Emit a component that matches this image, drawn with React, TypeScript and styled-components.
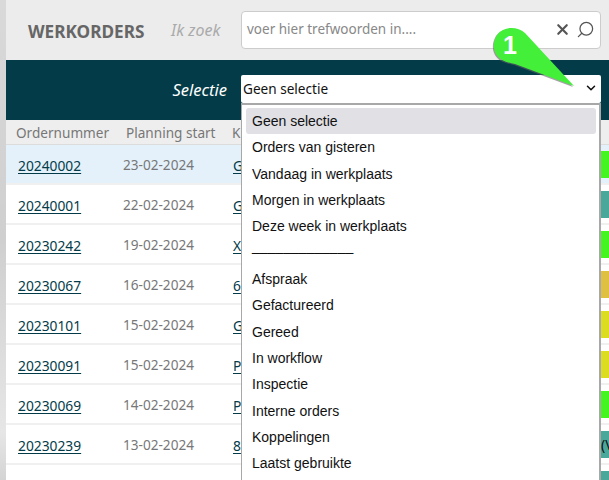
import styled, { createGlobalStyle } from "styled-components";
import { Fragment } from "react";
import { X, Search, ChevronDown } from "lucide-react";

const Global = createGlobalStyle`
    html, body { margin: 0; padding: 0; height: 100%; overflow: hidden; background: #fff; }
    * { box-sizing: border-box; }
`;

const Page = styled.div`
    position: relative;
    width: 609px;
    height: 480px;
    overflow: hidden;
    display: flex;
    font-family: "Noto Sans", "Open Sans", sans-serif;
`;
const Strip = styled.div`
    width: 6px;
    flex: none;
    background: linear-gradient(180deg, #d9d9d9 0%, #cfcfcf 50%, #e6e6e6 90%, #d4d4d4 100%);
`;
const Main = styled.div`
    flex: 1;
    min-width: 0;
`;
const Header = styled.header`
    height: 60px;
    background: #ececec;
    display: flex;
    align-items: center;
    padding-left: 22px;
`;
const Title = styled.h1`
    margin: 0;
    padding-top: 2px;
    width: 143px;
    color: #666;
    font-size: 17.2px;
    font-weight: 700;
    white-space: nowrap;
`;
const Hint = styled.span`
    width: 70px;
    color: #aaa;
    font-size: 16px;
    font-style: italic;
`;
const SearchBox = styled.div`
    width: 360px;
    height: 38px;
    background: #fff;
    border: 1px solid #ccc;
    border-radius: 4px;
    display: flex;
    align-items: center;
    padding: 0 5px 2px 5px;
    color: #888;
    font-size: 13.5px;
`;
const SearchText = styled.span`
    flex: 1;
`;
const SelectBar = styled.div`
    height: 60px;
    background: #033c48;
    display: flex;
    align-items: center;
    justify-content: flex-end;
    padding: 0 8px 2px 0;
    gap: 14px;
`;
const SelectLabel = styled.span`
    color: #fff;
    font-size: 16.5px;
    font-style: italic;
`;
const Select = styled.div`
    width: 360px;
    height: 28px;
    background: #fff;
    border-radius: 2px;
    display: flex;
    align-items: center;
    justify-content: space-between;
    padding: 0 3px 2px 2px;
    color: #111;
    font-size: 13.6px;
`;
const Columns = styled.div`
    height: 25px;
    background: #eeeeee;
    border-bottom: 1px solid #dcdcdc;
    display: flex;
    align-items: center;
    padding-left: 10px;
    color: #777;
    font-size: 13.6px;
`;
const Column = styled.span<{ $w: number }>`
    width: ${(p) => p.$w}px;
    flex: none;
    white-space: nowrap;
`;
const Row = styled.div<{ $active?: boolean }>`
    height: 40px;
    display: flex;
    align-items: center;
    padding-left: 12px;
    background: ${(p) => (p.$active ? "#e4f1fb" : "#fff")};
    border-bottom: 2px solid #f0f0f0;
    font-size: 13.8px;
`;
const OrderLink = styled.a`
    width: 105px;
    flex: none;
    padding-top: 3px;
    color: #033c48;
    text-decoration: underline;
    text-underline-offset: 2px;
`;
const DateCell = styled.span`
    width: 110px;
    flex: none;
    color: #777;
    font-size: 13.6px;
`;
const Customer = styled.a`
    flex: 1;
    padding-top: 3px;
    color: #033c48;
    text-decoration: underline;
    text-underline-offset: 2px;
    white-space: nowrap;
`;
const Status = styled.div<{ $color: string }>`
    width: 44px;
    height: 27px;
    flex: none;
    margin-right: -36px;
    background: ${(p) => p.$color};
    color: #111;
    font-size: 14px;
    line-height: 27px;
    white-space: nowrap;
    overflow: hidden;
`;
const Menu = styled.ul`
    position: absolute;
    left: 241px;
    top: 103px;
    width: 360px;
    height: 400px;
    margin: 0;
    padding: 3px 3px 0 4px;
    list-style: none;
    background: #fff;
    border-top: 2px solid #a8a8a8;
    border-left: 1px solid #a8a8a8;
    border-right: 2px solid #a8a8a8;
    font-family: "Liberation Sans", Arial, sans-serif;
    font-size: 14px;
    color: #111;
`;
const Option = styled.li<{ $selected?: boolean; $rule?: boolean }>`
    height: 26.33px;
    line-height: ${(p) => (p.$rule ? "12px" : "26.33px")};
    padding-left: 6px;
    border-radius: 3px;
    background: ${(p) => (p.$selected ? "#e0e0e5" : "transparent")};
    white-space: nowrap;
`;
const Callout = styled.svg`
    position: absolute;
    left: 492px;
    top: 23px;
`;
const CalloutNumber = styled.span`
    position: absolute;
    left: 503px;
    top: 32px;
    color: #fff;
    font-family: "Liberation Sans", Arial, sans-serif;
    font-size: 25px;
    font-weight: 700;
    line-height: 26px;
`;

const green = "#44f520";
const teal = "#4aa89a";
const gold = "#e0c040";
const yellow = "#dcdc20";

const orders = [
    { id: "20240002", date: "23-02-2024", customer: "G", color: green },
    { id: "20240001", date: "22-02-2024", customer: "G", color: teal },
    { id: "20230242", date: "19-02-2024", customer: "X", color: green },
    { id: "20230067", date: "16-02-2024", customer: "6", color: gold },
    { id: "20230101", date: "15-02-2024", customer: "G", color: yellow },
    { id: "20230091", date: "15-02-2024", customer: "P", color: yellow },
    { id: "20230069", date: "14-02-2024", customer: "P", color: green },
    { id: "20230239", date: "13-02-2024", customer: "8", color: teal, status: "(V" },
];

const options = [
    "Geen selectie",
    "Orders van gisteren",
    "Vandaag in werkplaats",
    "Morgen in werkplaats",
    "Deze week in werkplaats",
    "_____________",
    "Afspraak",
    "Gefactureerd",
    "Gereed",
    "In workflow",
    "Inspectie",
    "Interne orders",
    "Koppelingen",
    "Laatst gebruikte",
];

const calloutShape = "M82 63 L33 10 C25 3 12 3 5 12 C-1 22 2 32 10 37 C14 39 18 40 23 41 Z";

function App() {
    return (
        <Fragment>
            <Global />
            <Page>
                <Strip />
                <Main>
                    <Header>
                        <Title>WERKORDERS</Title>
                        <Hint>Ik zoek</Hint>
                        <SearchBox>
                            <SearchText>voer hier trefwoorden in....</SearchText>
                            <X size={17} color="#555" strokeWidth={3} />
                            <Search size={19} color="#555" strokeWidth={1.6} style={{ marginLeft: 5, transform: "scaleX(-1)" }} />
                        </SearchBox>
                    </Header>
                    <SelectBar>
                        <SelectLabel>Selectie</SelectLabel>
                        <Select>
                            Geen selectie
                            <ChevronDown size={14} color="#111" strokeWidth={2.6} />
                        </Select>
                    </SelectBar>
                    <Columns>
                        <Column $w={110}>Ordernummer</Column>
                        <Column $w={106}>Planning start</Column>
                        <Column $w={60}>Klant</Column>
                    </Columns>
                    {orders.map((order, i) => (
                        <Row key={order.id} $active={i === 0}>
                            <OrderLink>{order.id}</OrderLink>
                            <DateCell>{order.date}</DateCell>
                            <Customer>{order.customer}</Customer>
                            <Status $color={order.color}>{order.status}</Status>
                        </Row>
                    ))}
                    <Row>
                        <Customer />
                        <Status $color={teal} />
                    </Row>
                </Main>
                <Menu>
                    {options.map((option, i) => (
                        <Option key={option} $selected={i === 0} $rule={option.startsWith("_")}>{option}</Option>
                    ))}
                </Menu>
                <Callout width="90" height="70" viewBox="0 0 90 70">
                    <path d={calloutShape} fill="#666" opacity="0.6" transform="translate(-1 1)" />
                    <path d={calloutShape} fill="#44ef3a" />
                </Callout>
                <CalloutNumber>1</CalloutNumber>
            </Page>
        </Fragment>
    );
}

export default App;
